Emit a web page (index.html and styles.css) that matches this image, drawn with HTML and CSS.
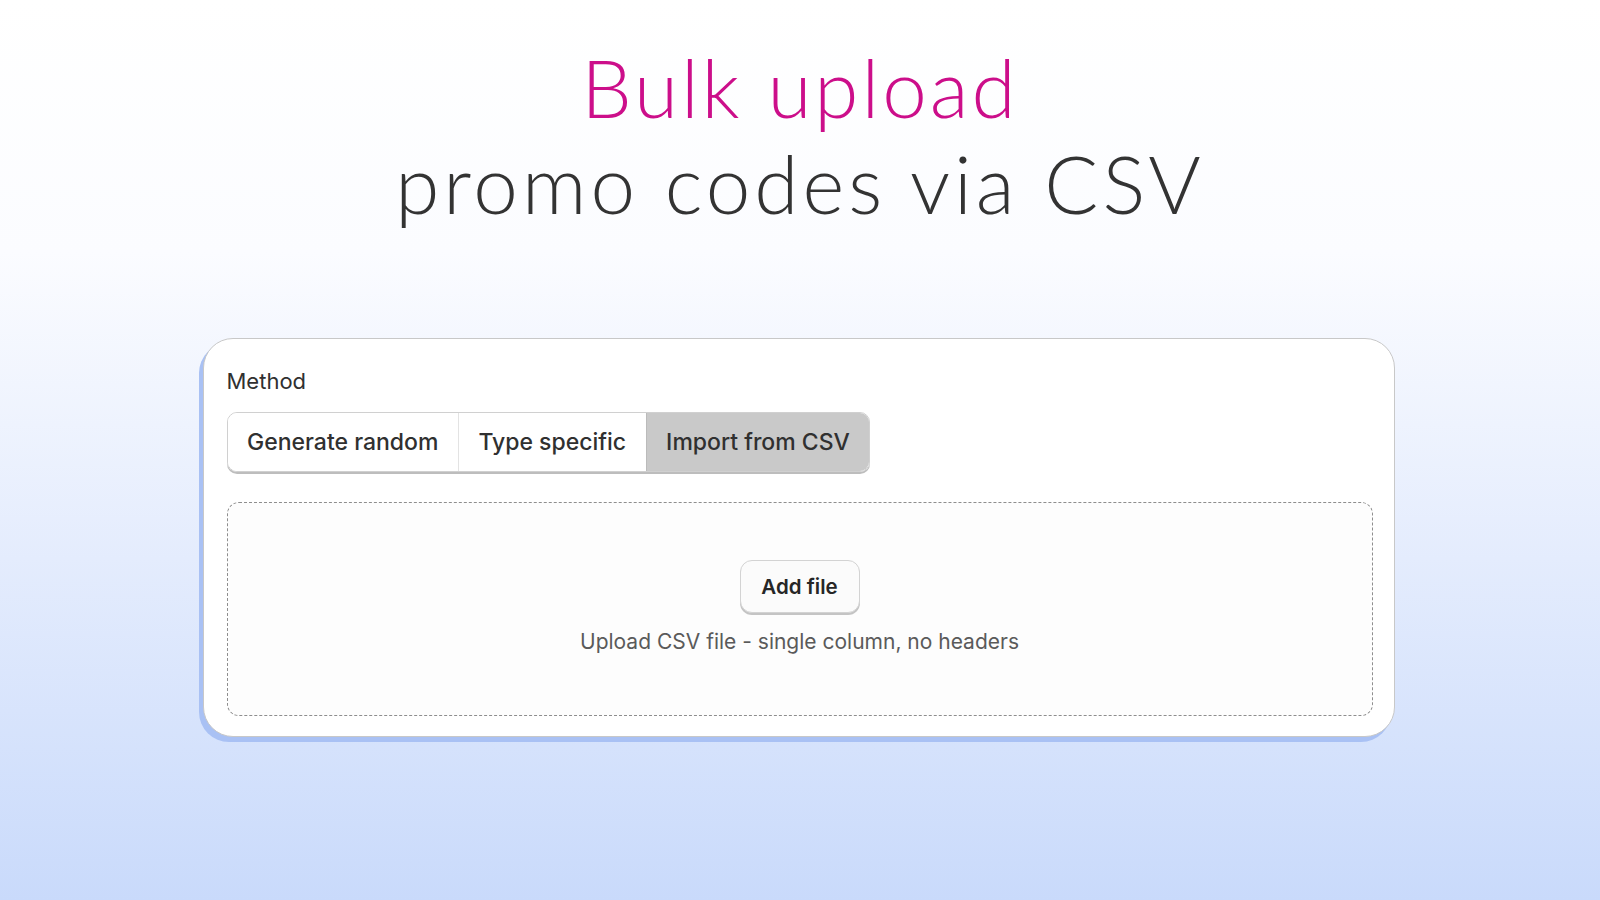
FILE: index.html
```html
<!DOCTYPE html>
<html lang="en">
<head>
    <meta charset="UTF-8">
    <title>Bulk upload promo codes via CSV</title>
    <link rel="stylesheet" href="styles.css">
</head>
<body>
    <div class="page">
        <div class="headline">
            <h1 class="accent">Bulk upload</h1>
            <h2>promo codes via CSV</h2>
        </div>

        <div class="card">
            <div class="label">Method</div>
            <div class="segmented">
                <button class="segment">Generate random</button>
                <button class="segment">Type specific</button>
                <button class="segment active">Import from CSV</button>
            </div>

            <div class="dropzone">
                <button class="add-btn">Add file</button>
                <p class="hint">Upload CSV file - single column, no headers</p>
            </div>
        </div>
    </div>
</body>
</html>
```

FILE: styles.css
```css
:root {
    --accent: #cc0e8a;
    --text-dark: #333333;
    --text-ui: #303030;
    --text-muted: #5a5a5a;
    --border: #d0d0d0;
    --shadow-blue: #a9c1f4;
}

* {
    margin: 0;
    padding: 0;
    box-sizing: border-box;
}

body {
    height: 900px;
    font-family: 'Inter', sans-serif;
    background: linear-gradient(to bottom, #ffffff 0%, #fbfcff 28%, #e4ecfd 62%, #c9dafb 100%);
    overflow: hidden;
}

.page {
    display: flex;
    flex-direction: column;
    align-items: center;
}

.headline {
    text-align: center;
    font-family: 'Lato', sans-serif;
    font-weight: 300;
    padding-top: 39px;
}

.headline h1,
.headline h2 {
    font-weight: 300;
    font-size: 80px;
    line-height: 96px;
}

.headline .accent {
    color: var(--accent);
    letter-spacing: 3px;
}

.headline h2 {
    color: var(--text-dark);
    letter-spacing: 4px;
}

.card {
    width: 1192px;
    margin-top: 107px;
    margin-left: -3px;
    background: #ffffff;
    border: 1px solid #c8c8c8;
    border-radius: 30px;
    box-shadow: -4px 5px 0 var(--shadow-blue);
    padding: 27px 21px 20px 23px;
}

.label {
    font-size: 22px;
    color: var(--text-ui);
    line-height: 30px;
}

.segmented {
    display: inline-flex;
    margin-top: 16px;
    border: 1px solid var(--border);
    border-radius: 10px;
    overflow: hidden;
    box-shadow: 0 2px 0 #bdbdbd;
}

.segment {
    font-family: 'Inter', sans-serif;
    font-size: 23px;
    font-weight: 500;
    color: var(--text-ui);
    background: #ffffff;
    border: none;
    border-left: 1px solid #e3e3e3;
    height: 58px;
    padding: 0 19.5px;
}

.segment:first-child {
    border-left: none;
}

.segment.active {
    background: #c9c9c9;
    border-left: 1px solid #bbbbbb;
}

.dropzone {
    margin-top: 30px;
    height: 214px;
    border: 1px dashed #8e8e8e;
    border-radius: 12px;
    background: #fdfdfd;
    display: flex;
    flex-direction: column;
    align-items: center;
    justify-content: center;
    gap: 15px;
}

.add-btn {
    font-family: 'Inter', sans-serif;
    font-size: 20.5px;
    font-weight: 600;
    color: #262626;
    background: #fbfbfb;
    border: 1px solid #d3d3d3;
    border-radius: 12px;
    box-shadow: 0 2px 0 #c4c4c4;
    width: 120px;
    height: 53px;
    margin-top: -2px;
}

.hint {
    font-size: 21px;
    color: var(--text-muted);
    line-height: 28px;
}
```
